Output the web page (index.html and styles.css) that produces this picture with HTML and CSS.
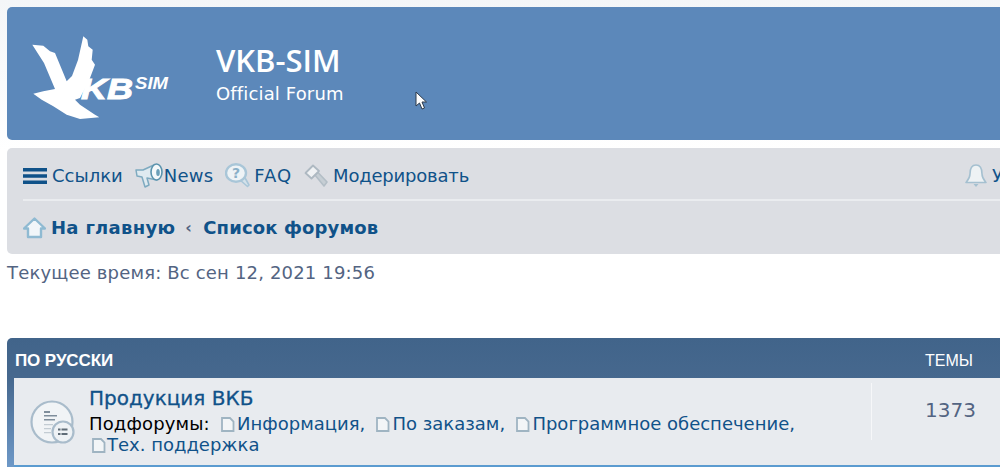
FILE: index.html
```html
<!DOCTYPE html>
<html lang="ru">
<head>
    <meta charset="UTF-8">
    <title>VKB-SIM Official Forum</title>
    <link rel="stylesheet" href="styles.css">
</head>
<body>
    <div class="wrap">
        <div class="headerbar">
            <a class="logo" href="#">
                <svg width="137" height="84" viewBox="0 0 137 84">
                    <path fill="#fff" d="M0.300 8.700 L11.300 9.700 L18 15.300 L23 17 L34.700 45.300 L40 40 L46 24 L51.300 0.300 L55.300 3.700 L56.300 10.300 L60.700 13.700 L59.700 23.700 L63 28.700 L58 42 L53 52 L48 62 L43 63.700 L48 68.700 L63 78.700 L67.300 81.300 L48 83 L34.700 78.700 L21.300 70.300 L9.700 63.700 L1.300 57.700 L11.300 55.300 L23 53 L12 27 Z"/>
                    <text class="logo-kb" x="49" y="63" textLength="52" lengthAdjust="spacingAndGlyphs">KB</text>
                    <text class="logo-sim" x="103" y="53" textLength="33" lengthAdjust="spacingAndGlyphs">SIM</text>
                </svg>
            </a>
            <div class="site-desc">
                <h1>VKB-SIM</h1>
                <p>Official Forum</p>
            </div>
        </div>

        <div class="navbar">
            <ul class="nav-row">
                <li class="nav-item">
                    <svg class="burger" width="24" height="16" viewBox="0 0 24 16"><path fill="#105289" d="M0 0h24v3.400H0zM0 6.300h24v3.400H0zM0 12.600h24V16H0z"/></svg>
                    <a href="#">Ссылки</a>
                </li>
                <li class="nav-item news">
                    <svg width="29" height="26" viewBox="0 0 29 26"><path fill="#dfeaf0" stroke="#7eaac0" stroke-width="1.500" stroke-linejoin="round" d="M1 7 L8 7 L20 1.500 L22 17 L12 15 L14 22 L10 24 L7 14 L2 13 Z"/><ellipse cx="21.500" cy="9" rx="5.500" ry="8" fill="#f4f8fa" stroke="#5b93ad" stroke-width="1.600"/><ellipse cx="23" cy="9.500" rx="1.800" ry="3.500" fill="#6b9fb8"/></svg>
                    <a href="#">News</a>
                </li>
                <li class="nav-item faq">
                    <svg width="25" height="25" viewBox="0 0 25 25"><path fill="#d4e2ea" stroke="#a9c6d8" stroke-width="1.600" stroke-linejoin="round" d="M15 17 L22.500 23.500 L24 22 L19.500 14 Z"/><ellipse cx="11" cy="10" rx="10" ry="8.800" fill="#eef3f6" stroke="#a9c6d8" stroke-width="2.400"/><text class="faq-mark" x="11" y="15">?</text></svg>
                    <a href="#">FAQ</a>
                </li>
                <li class="nav-item mod">
                    <svg width="24" height="24" viewBox="0 0 24 24"><path fill="#c6ced4" stroke="#b3bec6" stroke-width="1.600" stroke-linejoin="round" d="M11 11 L14 8.500 L23 18 L20 22 Z"/><path fill="#f0f2f4" stroke="#aeb9c2" stroke-width="1.800" stroke-linejoin="round" d="M1.500 9 L9 1.500 L15 7 L7.500 14.500 Z"/></svg>
                    <a href="#">Модерировать</a>
                </li>
                <li class="nav-item nav-right">
                    <svg width="22" height="25" viewBox="0 0 22 25"><path fill="#eef2f4" stroke="#a5c0d0" stroke-width="1.600" stroke-linejoin="round" d="M11 2 C6 2 5 6 5 11 C5 15 3 17 1 19.500 L21 19.500 C19 17 17 15 17 11 C17 6 16 2 11 2 Z"/><path fill="#a5c0d0" d="M8.500 21h5l-2.500 3z"/></svg>
                    <a href="#">Уведомления</a>
                </li>
            </ul>
            <ul class="nav-row crumbs">
                <li class="nav-item">
                    <svg width="23" height="22" viewBox="0 0 23 22"><path fill="#f1f6f9" stroke="#8fbad2" stroke-width="2.400" stroke-linejoin="round" d="M11.500 1.500 L22 11.500 L18 11.500 L18 20 L5 20 L5 11.500 L1 11.500 Z"/></svg>
                    <a href="#">На главную</a>
                </li>
                <li class="crumb-sep">‹</li>
                <li class="nav-item crumb-last"><a href="#">Список форумов</a></li>
            </ul>
        </div>

        <p class="time">Текущее время: Вс сен 12, 2021 19:56</p>

        <div class="forabg">
            <div class="forum-head">
                <span class="forum-cat">ПО РУССКИ</span>
                <span class="col-topics">ТЕМЫ</span>
            </div>
            <div class="forum-row">
                <div class="forum-icon">
                    <svg width="46" height="46" viewBox="0 0 46 46">
                        <circle cx="22" cy="22" r="20.500" fill="#f1f4f6" stroke="#a9bccb" stroke-width="2.200"/>
                        <path fill="#7f8e9b" d="M14 11h6v2h-6zM14 15h13v1.500H14zM14 19h11v1.500H14z"/>
                        <path fill="#c3ccd3" d="M14 24h9v1.200h-9zM14 28h7v1.200h-7zM14 32h7v1.200h-7z"/>
                        <circle cx="33" cy="32" r="10.500" fill="#eef2f5" stroke="#a9bccb" stroke-width="2.200"/>
                        <path fill="#5f6c77" d="M28 28.500h2.500v2H28zM31.500 28.500h6v2h-6zM28 33h2.500v2H28zM31.500 33h6v2h-6z"/>
                    </svg>
                </div>
                <div class="forum-main">
                    <a class="forum-title" href="#">Продукция ВКБ</a>
                    <div class="subforums">
                        <span class="sub-label">Подфорумы:</span>
                        <a href="#" class="sub"><svg width="15" height="15" viewBox="0 0 15 15"><path fill="#f2f5f7" stroke="#9fb4c2" stroke-width="1.800" d="M2 1h8l3.500 3.500V14H2z"/></svg>Информация,</a>
                        <a href="#" class="sub"><svg width="15" height="15" viewBox="0 0 15 15"><path fill="#f2f5f7" stroke="#9fb4c2" stroke-width="1.800" d="M2 1h8l3.500 3.500V14H2z"/></svg>По заказам,</a>
                        <a href="#" class="sub"><svg width="15" height="15" viewBox="0 0 15 15"><path fill="#f2f5f7" stroke="#9fb4c2" stroke-width="1.800" d="M2 1h8l3.500 3.500V14H2z"/></svg>Программное обеспечение,</a>
                        <a href="#" class="sub sub-last"><svg width="15" height="15" viewBox="0 0 15 15"><path fill="#f2f5f7" stroke="#9fb4c2" stroke-width="1.800" d="M2 1h8l3.500 3.500V14H2z"/></svg>Тех. поддержка</a>
                    </div>
                </div>
                <div class="count">1373</div>
            </div>
        </div>
    </div>

    <svg class="cursor" width="13" height="20" viewBox="0 0 13 20"><path fill="#fff" stroke="#2d3a4a" stroke-width="1" d="M1 1 L1 15 L4.500 12 L7 18 L9.500 17 L7 11 L11.500 11 Z"/></svg>
</body>
</html>
```

FILE: styles.css
```css
* {
    box-sizing: border-box;
    margin: 0;
    padding: 0;
}

html, body {
    height: 469px;
    overflow: hidden;
}

body {
    position: relative;
    background: linear-gradient(#f4f6f8, #fff 150px);
    font-family: "DejaVu Sans", Verdana, sans-serif;
    font-size: 18px;
    color: #536482;
}

a {
    color: #105289;
    text-decoration: none;
}

ul {
    list-style: none;
}

.wrap {
    width: 1300px;
    padding: 7px 7px 0;
}

/* Header */
.headerbar {
    display: flex;
    align-items: center;
    height: 133px;
    padding-left: 25px;
    background-color: #5c88ba;
    border-radius: 5px;
    color: #fff;
}

.logo {
    display: block;
    height: 84px;
    margin-top: 9px;
}

.logo-kb {
    fill: #fff;
    stroke: #fff;
    stroke-width: 1px;
    font-family: "Liberation Sans", sans-serif;
    font-size: 30px;
    font-weight: 700;
    font-style: italic;
}

.logo-sim {
    fill: #fff;
    font-family: "Liberation Sans", sans-serif;
    font-size: 17px;
    font-weight: 700;
    font-style: italic;
}

.site-desc {
    margin-left: 47px;
}

.site-desc h1 {
    font-family: "Open Sans", sans-serif;
    font-size: 31px;
    font-weight: 600;
    line-height: 36px;
}

.site-desc p {
    margin-top: 4px;
    font-size: 18px;
    line-height: 24px;
    letter-spacing: 0.15px;
}

/* Nav bar */
.navbar {
    height: 106px;
    margin-top: 8px;
    padding: 0 16px;
    background-color: #dcdee3;
    border-radius: 5px;
}

.nav-row {
    display: flex;
    align-items: center;
    height: 53px;
    padding-top: 4px;
    gap: 12px;
    border-bottom: 2px solid #eaecef;
}

.nav-item {
    display: flex;
    align-items: center;
    gap: 5px;
}

.news {
    gap: 0;
}

.news a {
    letter-spacing: 0.2px;
}

.faq {
    gap: 4px;
}

.faq a {
    letter-spacing: 1px;
}

.faq-mark {
    fill: #8ab0c8;
    font-size: 14px;
    font-weight: 700;
    text-anchor: middle;
}

.mod a {
    letter-spacing: -0.2px;
}

.nav-right {
    margin-left: 484px;
}

.crumbs {
    gap: 7px;
    padding-top: 0;
    border-bottom: none;
    font-weight: 700;
    letter-spacing: 0.3px;
}

.crumb-sep {
    color: #536482;
    font-size: 16px;
    margin: 0 3px;
}

.crumb-last {
    margin-left: 1px;
    letter-spacing: 0.15px;
}

.time {
    margin-top: 8px;
    line-height: 22px;
    letter-spacing: 0.17px;
}

/* Forum list */
.forabg {
    margin-top: 54px;
    padding: 0 7px;
    background-color: #6a8fb5;
    background-image: linear-gradient(#41648a, #46688e 40px, #6e99c8 130px);
    border-radius: 5px 5px 0 0;
}

.forum-head {
    display: flex;
    align-items: center;
    height: 40px;
    padding-top: 6px;
    color: #fff;
    font-family: "Liberation Sans", sans-serif;
    font-size: 16px;
}

.forum-cat {
    width: 857px;
    margin-left: 1px;
    font-size: 17px;
    font-weight: 700;
    letter-spacing: -0.1px;
}

.col-topics {
    margin-left: 53px;
}

.forum-row {
    display: flex;
    height: 89px;
    background-color: #e8ebef;
    border-bottom: 2px solid #5b9bd0;
}

.forum-icon {
    width: 75px;
    padding: 22px 0 0 16px;
}

.forum-main {
    position: relative;
    width: 783px;
    padding-top: 6px;
}

/* thin divider next to the counters */
.forum-main::after {
    content: "";
    position: absolute;
    right: 0;
    top: 5px;
    bottom: 25px;
    width: 1px;
    background-color: #f6f7f9;
}

.forum-title {
    display: block;
    font-size: 20px;
    font-weight: 500;
    line-height: 29px;
    -webkit-text-stroke: 0.3px #105289;
}

.subforums {
    width: 730px;
    line-height: 21px;
}

.sub-label {
    color: #000;
    letter-spacing: 0.15px;
}

.sub {
    display: inline-block;
    margin-left: 4px;
    white-space: nowrap;
}

.sub svg {
    vertical-align: -2px;
    margin-right: 2.5px;
}

.sub-last {
    margin-left: 2px;
}

.sub-last svg {
    margin-right: 1px;
}

.count {
    width: 132px;
    padding: 20px 0 0 53px;
    font-size: 20px;
}

.cursor {
    position: absolute;
    left: 415px;
    top: 91px;
}
```
